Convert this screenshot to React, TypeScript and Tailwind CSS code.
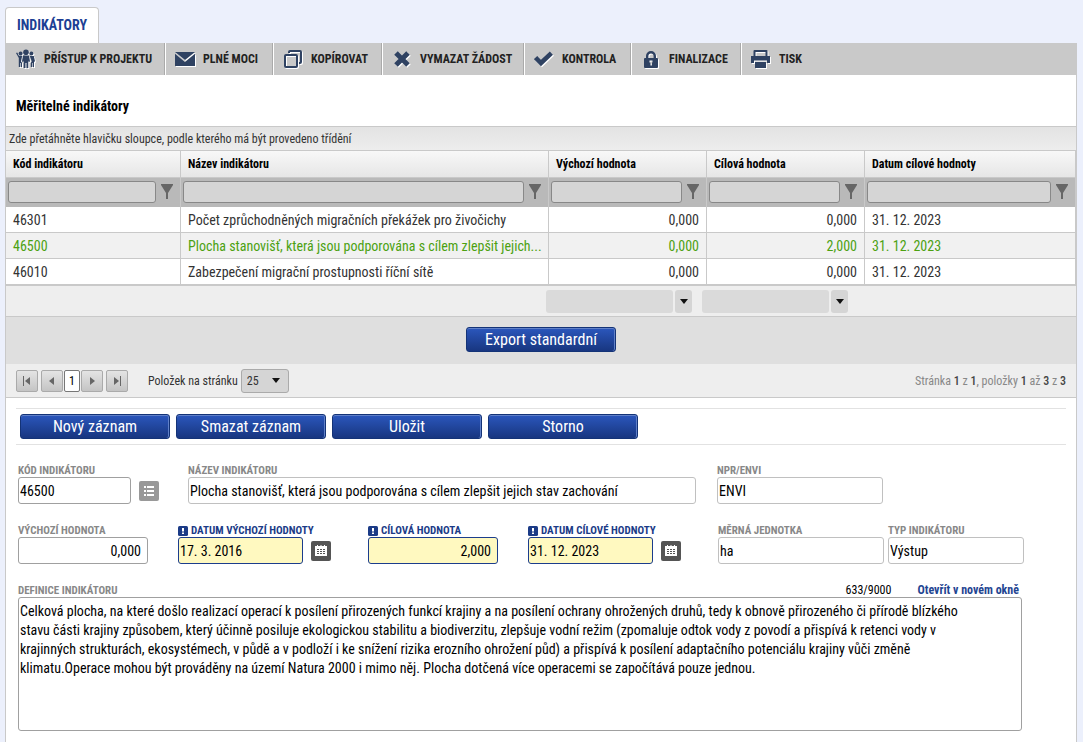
import React, { useState } from 'react'

interface Indicator {
  code: string
  name: string
  initial: string
  target: string
  date: string
}

const indicators: Indicator[] = [
  { code: '46301', name: 'Počet zprůchodněných migračních překážek pro živočichy', initial: '0,000', target: '0,000', date: '31. 12. 2023' },
  { code: '46500', name: 'Plocha stanovišť, která jsou podporována s cílem zlepšit jejich...', initial: '0,000', target: '2,000', date: '31. 12. 2023' },
  { code: '46010', name: 'Zabezpečení migrační prostupnosti říční sítě', initial: '0,000', target: '0,000', date: '31. 12. 2023' },
]

const columns = ['Kód indikátoru', 'Název indikátoru', 'Výchozí hodnota', 'Cílová hodnota', 'Datum cílové hodnoty']

const definition =
  'Celková plocha, na které došlo realizací operací k posílení přirozených funkcí krajiny a na posílení ochrany ohrožených druhů, tedy k obnově přirozeného či přírodě blízkého stavu části krajiny způsobem, který účinně posiluje ekologickou stabilitu a biodiverzitu, zlepšuje vodní režim (zpomaluje odtok vody z povodí a přispívá k retenci vody v krajinných strukturách, ekosystémech, v půdě a v podloží i ke snížení rizika erozního ohrožení půd) a přispívá k posílení adaptačního potenciálu krajiny vůči změně klimatu.Operace mohou být prováděny na území Natura 2000 i mimo něj. Plocha dotčená více operacemi se započítává pouze jednou.'

function PeopleIcon() {
  return (
    <svg width="20" height="20" viewBox="0 0 20 20" fill="currentColor">
      <circle cx="10" cy="3.2" r="2.8" />
      <circle cx="4.6" cy="4.4" r="2" />
      <circle cx="15.4" cy="4.4" r="2" />
      <path d="M7 6.500h6l1 6-1.200.5-.5-1.500V19h-1.800v-5h-1v5H7.700v-7.500L7.200 13 6 12.500z" />
      <path d="M0 4l1.200-.4L3 6.800h3.200L5 12.500l1 1.300V18H4.700v-4h-.6v4H2.800V9z" />
      <path d="M13.800 7h4L19 12.200l-1 .8v5h-1.300v-4h-.6v4h-1.300v-4.200l1-1.300z" />
    </svg>
  )
}

function MailIcon() {
  return (
    <svg width="20" height="14" viewBox="0 0 20 14" fill="currentColor">
      <path d="M0 0h20L10 8z" />
      <path d="M0 1.800 10 10 20 1.800V14H0z" />
    </svg>
  )
}

function CopyIcon() {
  return (
    <svg width="18" height="18" viewBox="0 0 18 18" fill="none" stroke="currentColor" strokeWidth="2">
      <path d="M5 3V2q0-1 1-1h10q1 0 1 1v10q0 1-1 1h-1" />
      <rect x="1" y="5" width="12" height="12" rx="1" />
    </svg>
  )
}

function CrossIcon() {
  return (
    <svg width="16" height="16" viewBox="0 0 16 16" fill="none" stroke="currentColor" strokeWidth="5">
      <path d="M2 2l12 12M14 2L2 14" />
    </svg>
  )
}

function CheckIcon() {
  return (
    <svg width="19" height="16" viewBox="0 0 19 16" fill="none" stroke="currentColor" strokeWidth="4.6">
      <path d="M1.600 6.500l5.400 5.500L17.400 2.200" />
    </svg>
  )
}

function LockIcon() {
  return (
    <svg width="14" height="17" viewBox="0 0 14 17" fill="currentColor">
      <path fillRule="evenodd" d="M2 7V5a5 5 0 0 1 10 0v2h1q1 0 1 1v8q0 1-1 1H1q-1 0-1-1V8q0-1 1-1zM4.400 7h5.200V5a2.600 2.600 0 0 0-5.200 0zM5.500 9.500v2h1v3h1.500v-3h.5v-2z" />
    </svg>
  )
}

function PrintIcon() {
  return (
    <svg width="19" height="18" viewBox="0 0 19 18" fill="currentColor">
      <path fillRule="evenodd" d="M2.500 6V1q0-1 1-1h12q1 0 1 1v5H19v7h-3v-2.500H3V13H0V6zM4.500 2v4h10V2z" />
      <path d="M4 12h11v6H4z" />
    </svg>
  )
}

const toolbar = [
  { label: 'Přístup k projektu', icon: <PeopleIcon />, width: 'w-[159px]' },
  { label: 'Plné moci', icon: <MailIcon />, width: 'w-[108px]' },
  { label: 'Kopírovat', icon: <CopyIcon />, width: 'w-[109px]' },
  { label: 'Vymazat žádost', icon: <CrossIcon />, width: 'w-[142px]' },
  { label: 'Kontrola', icon: <CheckIcon />, width: 'w-[107px]' },
  { label: 'Finalizace', icon: <LockIcon />, width: 'w-[110px]' },
  { label: 'Tisk', icon: <PrintIcon />, width: 'w-[90px]' },
]

function FunnelIcon() {
  return (
    <svg width="12" height="16" viewBox="0 0 12 16" fill="#666" className="shrink-0">
      <path d="M0 0h12v1L7 9v6H5V9L0 1z" />
    </svg>
  )
}

function Caret({ className = '' }: { className?: string }) {
  return (
    <svg width="8" height="5" viewBox="0 0 8 5" fill="#111" className={className}>
      <path d="M0 0h8L4 5z" />
    </svg>
  )
}

function BlueButton({ children }: { children: React.ReactNode }) {
  return (
    <button
      type="button"
      className="h-[25px] w-[150px] rounded-[3px] border border-[#143377] bg-gradient-to-b from-[#2b57bd] to-[#183680] text-[16px] leading-[22px] text-white shadow-[inset_0_1px_0_#6080c8,inset_-1px_0_0_#6080c8]"
    >
      {children}
    </button>
  )
}

function PagerButton({ label, children }: { label: string; children: React.ReactNode }) {
  return (
    <button
      type="button"
      aria-label={label}
      className="flex h-[22px] w-[22px] items-center justify-center rounded-[2px] border border-[#aaa] bg-gradient-to-b from-[#e4e4e4] to-[#c4c4c4]"
    >
      <svg width="10" height="10" viewBox="0 0 10 10" fill="#666">
        {children}
      </svg>
    </button>
  )
}

function SummaryCombo({ label }: { label: string }) {
  return (
    <div className="flex gap-[2px]">
      <input aria-label={label} className="h-[23px] w-[127px] rounded-[3px] bg-[#dadada] px-1" />
      <button type="button" aria-label={`${label} – výběr`} className="flex h-[23px] w-[17px] items-center justify-center rounded-[3px] bg-[#d5d5d5]">
        <Caret />
      </button>
    </div>
  )
}

interface FieldProps {
  id: string
  label: string
  value: string
  width?: string
  required?: boolean
  right?: boolean
  dark?: boolean
  action?: React.ReactNode
}

function Field({ id, label, value, width = 'w-full', required, right, dark, action }: FieldProps) {
  const tone = required ? 'border-[#1c3d8c] bg-[#fff9c0]' : dark ? 'border-[#a0a0a0] bg-white' : 'border-[#c0c0c0] bg-white'
  return (
    <div>
      <label
        htmlFor={id}
        className={`flex h-[13px] items-center gap-[3px] whitespace-nowrap text-[11px] font-bold leading-[13px] uppercase ${required ? 'text-[#1b3b87]' : 'text-[#888]'}`}
      >
        {required && (
          <svg width="10" height="10" viewBox="0 0 10 10">
            <rect width="10" height="10" rx="1.5" fill="#1b3b87" />
            <path d="M4 2h2v3.500H4zM4 6.500h2v1.500H4z" fill="#fff" />
          </svg>
        )}
        {label}
      </label>
      <div className="flex items-center gap-2">
        <input
          id={id}
          defaultValue={value}
          className={`h-[27px] min-w-0 rounded-[3px] border text-[14px] leading-[20px] text-black ${width} ${tone} ${right ? 'px-[6px] text-right' : 'px-px'}`}
        />
        {action}
      </div>
    </div>
  )
}

function ListButton() {
  return (
    <button type="button" aria-label="Vybrat indikátor" className="flex h-5 w-5 shrink-0 items-center justify-center rounded-[2px] bg-[#999]">
      <svg width="10" height="10" viewBox="0 0 10 10" fill="#fff">
        <path d="M0 0h2v2H0zM3 0h7v2H3zM0 4h2v2H0zM3 4h7v2H3zM0 8h2v2H0zM3 8h7v2H3z" />
      </svg>
    </button>
  )
}

function CalendarButton() {
  return (
    <button type="button" aria-label="Otevřít kalendář" className="flex h-5 w-5 shrink-0 items-center justify-center rounded-[2px] bg-[#555]">
      <svg width="12" height="12" viewBox="0 0 12 12">
        <path d="M0 1h2V0h1v1h2.500V0h1v1H9V0h1v1h2v10H0z" fill="#fff" />
        <path d="M2 4h2v1H2zM5 4h2v1H5zM8 4h2v1H8zM2 6h2v1H2zM5 6h2v1H5zM8 6h2v1H8zM2 8h2v1H2zM5 8h2v1H5zM8 8h2v1H8z" fill="#555" />
      </svg>
    </button>
  )
}

export default function App() {
  const [selected, setSelected] = useState('46500')

  return (
    <div className="flex min-h-screen flex-col bg-[#ecf0fc] pt-[7px] pr-[6px] pl-[5px] font-['Roboto_Condensed','Liberation_Sans_Narrow',Roboto,sans-serif] text-[#333]">
      <div className="flex">
        <button type="button" className="h-9 w-[94px] rounded-t-[4px] border border-b-0 border-[#c9c9c9] bg-white text-[14px] font-bold text-[#1c3f94]">
          INDIKÁTORY
        </button>
      </div>

      <main className="flex-1 border-x border-[#c9c9c9] bg-white">
        {/* Toolbar */}
        <div className="flex h-8 items-stretch bg-[#c9c9c9]">
          {toolbar.map((item, i) => (
            <button
              key={item.label}
              type="button"
              className={`flex items-center whitespace-nowrap pl-[9px] text-[12px] font-bold uppercase text-[#222] ${item.width} ${i < toolbar.length - 1 ? 'border-r border-[#aaa] shadow-[1px_0_0_#fff]' : ''}`}
            >
              <span className="flex w-[21px] shrink-0 justify-center text-[#2f4262] drop-shadow-[1px_1px_0_#fff]">{item.icon}</span>
              <span className="ml-2">{item.label}</span>
            </button>
          ))}
        </div>

        <h1 className="flex h-[51px] items-center px-[10px] pt-3 text-[14px] font-bold text-black">Měřitelné indikátory</h1>

        {/* Grid */}
        <div className="flex h-[25px] items-center border-y border-[#c9c9c9] bg-gradient-to-b from-[#e3e3e3] to-[#ededed] px-[3px] text-[12px]">
          Zde přetáhněte hlavičku sloupce, podle kterého má být provedeno třídění
        </div>
        <table className="w-full table-fixed border-separate border-spacing-0">
          <colgroup>
            <col className="w-[175px]" />
            <col />
            <col className="w-[158px]" />
            <col className="w-[158px]" />
            <col className="w-[211px]" />
          </colgroup>
          <thead>
            <tr>
              {columns.map((column) => (
                <th key={column} className="h-[27px] border-r border-b border-[#c9c9c9] bg-gradient-to-b from-[#f8f8f8] to-[#e6e6e6] px-[7px] text-left text-[12px] font-bold leading-4 text-black">
                  {column}
                </th>
              ))}
            </tr>
            <tr>
              {columns.map((column) => (
                <td key={column} className="h-[29px] border-r border-[#c9c9c9] bg-[#b9b9b9] p-0 pb-[2px]">
                  <div className="flex items-center gap-[5px] pr-[7px] pl-[2px]">
                    <input aria-label={`Filtr: ${column}`} className="h-[22px] min-w-0 flex-1 rounded-[3px] border border-[#888] bg-[#d5d5d5] px-1 text-[13px]" />
                    <button type="button" aria-label={`Filtrovat: ${column}`}>
                      <FunnelIcon />
                    </button>
                  </div>
                </td>
              ))}
            </tr>
          </thead>
          <tbody className="text-[14px] leading-5">
            {indicators.map((row) => {
              const active = row.code === selected
              const cell = 'h-[26px] border-r border-b border-[#c9c9c9] px-[7px] py-0 whitespace-nowrap'
              return (
                <tr key={row.code} onClick={() => setSelected(row.code)} className={active ? 'bg-[#f1f1f1] text-[#4ca111]' : 'bg-white'}>
                  <td className={cell}>{row.code}</td>
                  <td className={cell}>{row.name}</td>
                  <td className={`${cell} text-right`}>{row.initial}</td>
                  <td className={`${cell} text-right`}>{row.target}</td>
                  <td className={cell}>{row.date}</td>
                </tr>
              )
            })}
          </tbody>
        </table>

        {/* Summary row */}
        <div className="flex h-8 items-center justify-end gap-[10px] border-t border-b border-[#c9c9c9] bg-[#eee] pr-[228px]">
          <SummaryCombo label="Souhrn výchozí hodnoty" />
          <SummaryCombo label="Souhrn cílové hodnoty" />
        </div>

        <div className="flex h-[47px] items-center justify-center bg-[#dfdfdf] pb-[2px]">
          <BlueButton>Export standardní</BlueButton>
        </div>

        {/* Pager */}
        <div className="flex h-[34px] items-center justify-between border-b border-[#c9c9c9] bg-[#eee] px-[10px] text-[12px]">
          <div className="flex items-center">
            <div className="flex items-center gap-[3px]">
              <PagerButton label="První stránka">
                <path d="M1 0h1v10H1zM8 1v8L3 5z" />
              </PagerButton>
              <div className="flex gap-px">
                <PagerButton label="Předchozí stránka">
                  <path d="M7 1v8L2 5z" />
                </PagerButton>
                <button type="button" className="h-[22px] w-4 rounded-[2px] border border-[#777] bg-white text-center text-[12px] text-black">
                  1
                </button>
                <PagerButton label="Další stránka">
                  <path d="M3 1v8l5-4z" />
                </PagerButton>
              </div>
              <PagerButton label="Poslední stránka">
                <path d="M2 1v8l5-4zM8 0h1v10H8z" />
              </PagerButton>
            </div>
            <label htmlFor="page-size" className="ml-5">
              Položek na stránku
            </label>
            <div className="relative ml-[3px]">
              <select id="page-size" defaultValue="25" className="h-6 w-12 appearance-none rounded-[3px] border border-[#aaa] bg-[#d5d5d5] pl-[5px] text-[12px]">
                <option>10</option>
                <option>25</option>
                <option>50</option>
              </select>
              <Caret className="pointer-events-none absolute top-[9px] right-[9px]" />
            </div>
          </div>
          <p className="text-[#888]">
            Stránka <b className="font-medium text-[#444]">1</b> z <b className="font-medium text-[#444]">1</b>, položky{' '}
            <b className="font-medium text-[#444]">1</b> až <b className="font-medium text-[#444]">3</b> z <b className="font-medium text-[#444]">3</b>
          </p>
        </div>

        {/* Record actions */}
        <div className="mx-[10px] mt-[10px] flex h-[37px] items-center gap-[6px] border-y border-[#e2e2e2] pl-1">
          <BlueButton>Nový záznam</BlueButton>
          <BlueButton>Smazat záznam</BlueButton>
          <BlueButton>Uložit</BlueButton>
          <BlueButton>Storno</BlueButton>
        </div>

        {/* Record detail */}
        <form className="mt-[19px] mr-[52px] ml-3 flex flex-col gap-5 pb-[10px]">
          <div className="flex">
            <div className="w-[170px]">
              <Field id="code" label="Kód indikátoru" value="46500" width="w-[113px]" dark action={<ListButton />} />
            </div>
            <div className="mr-[21px] flex-1">
              <Field id="name" label="Název indikátoru" value="Plocha stanovišť, která jsou podporována s cílem zlepšit jejich stav zachování" />
            </div>
            <div className="w-[307px]">
              <Field id="npr" label="NPR/ENVI" value="ENVI" width="w-[166px]" />
            </div>
          </div>

          <div className="flex gap-[30px]">
            <Field id="initial" label="Výchozí hodnota" value="0,000" width="w-[130px]" dark right />
            <div className="w-[160px]">
              <Field id="initial-date" label="Datum výchozí hodnoty" value="17. 3. 2016" width="w-[125px]" required action={<CalendarButton />} />
            </div>
            <Field id="target" label="Cílová hodnota" value="2,000" width="w-[130px]" required right />
            <div className="w-[160px]">
              <Field id="target-date" label="Datum cílové hodnoty" value="31. 12. 2023" width="w-[125px]" required action={<CalendarButton />} />
            </div>
            <div className="flex gap-1">
              <Field id="unit" label="Měrná jednotka" value="ha" width="w-[166px]" />
              <Field id="type" label="Typ indikátoru" value="Výstup" width="w-[136px]" />
            </div>
          </div>

          <div className="mr-[2px]">
            <div className="flex h-[13px] items-center">
              <label htmlFor="definition" className="flex-1 text-[11px] font-bold leading-[13px] uppercase text-[#888]">
                Definice indikátoru
              </label>
              <span className="mr-[26px] text-[12px] leading-[13px] text-black">633/9000</span>
              <a href="#" className="mr-[3px] text-[12px] leading-[13px] font-bold text-[#1f4592]">
                Otevřít v novém okně
              </a>
            </div>
            <textarea
              id="definition"
              defaultValue={definition}
              className="block h-[134px] w-full resize-none rounded-[3px] border border-[#a0a0a0] pt-1 pr-9 pl-px text-[14px] leading-[19px] text-black"
            />
          </div>
        </form>
      </main>
    </div>
  )
}
